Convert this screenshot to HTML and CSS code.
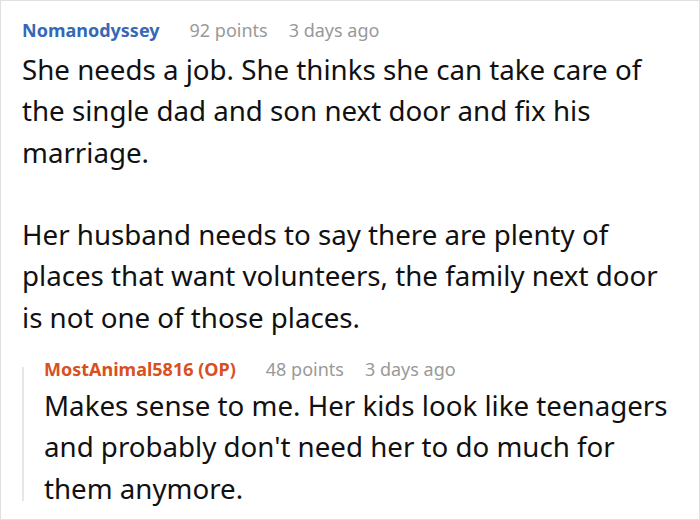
FILE: index.html
```html
<!DOCTYPE html>
<html>
<head>
<meta charset="utf-8">
<link rel="stylesheet" href="styles.css">
</head>
<body>
<div class="frame">
  <div class="comment">
    <div class="meta">
      <span class="author">Nomanodyssey</span>
      <span class="info">92 points</span>
      <span class="info">3 days ago</span>
    </div>
    <p class="text">She needs a job. She thinks she can take care of the single dad and son next door and fix his marriage.<br><br>Her husband needs to say there are plenty of places that want volunteers, the family next door is not one of those places.</p>
    <div class="reply">
      <div class="meta">
        <span class="author op">MostAnimal5816 (OP)</span>
        <span class="info">48 points</span>
        <span class="info">3 days ago</span>
      </div>
      <p class="text">Makes sense to me. Her kids look like teenagers and probably don't need her to do much for them anymore.</p>
    </div>
  </div>
</div>
</body>
</html>
```

FILE: styles.css
```css
html, body {
  margin: 0;
  padding: 0;
  background: #fff;
}
.frame {
  width: 700px;
  height: 520px;
  box-sizing: border-box;
  border: 1px solid #e0e0e0;
  padding: 16px 30px 0 21px;
  overflow: hidden;
  font-family: "Noto Sans", "Open Sans", sans-serif;
}
.meta {
  display: flex;
  align-items: baseline;
  font-size: 18px;
  line-height: 26px;
}
.author {
  font-weight: bold;
  color: #3568b5;
  margin-right: 30px;
}
.author.op {
  color: #d9501e;
}
.info {
  color: #999;
  margin-right: 21px;
}
.text {
  margin: 6px 0 0 0;
  font-size: 27.7px;
  line-height: 41.3px;
  color: #111;
}
.reply {
  position: relative;
  margin-top: 18px;
  padding-left: 22px;
}
.reply::before {
  content: "";
  position: absolute;
  left: 0;
  top: 11px;
  bottom: 8px;
  width: 2px;
  background: #e6e6e6;
}
.reply .text {
  margin-top: 3px;
}
```
